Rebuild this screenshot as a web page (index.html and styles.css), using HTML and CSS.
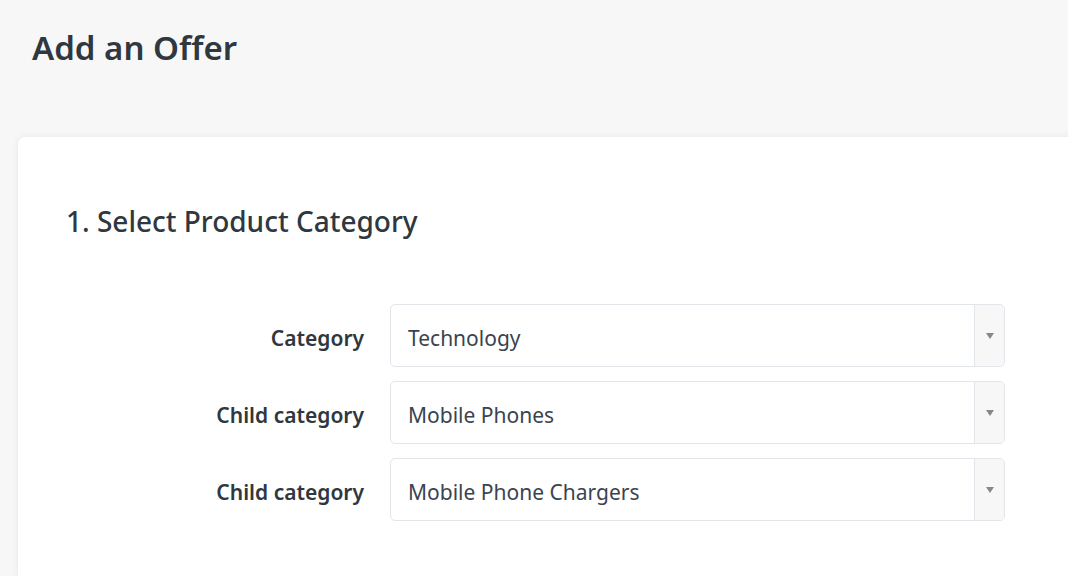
FILE: index.html
```html
<!DOCTYPE html>
<html>
<head>
<meta charset="utf-8">
<link rel="stylesheet" href="styles.css">
</head>
<body>
<div class="page">
  <h1 class="title">Add an Offer</h1>
  <div class="card">
    <h2 class="section-title">1. Select Product Category</h2>
    <div class="form">
      <div class="row">
        <label class="label">Category</label>
        <div class="select"><span class="value">Technology</span><span class="arrow"></span></div>
      </div>
      <div class="row">
        <label class="label">Child category</label>
        <div class="select"><span class="value">Mobile Phones</span><span class="arrow"></span></div>
      </div>
      <div class="row">
        <label class="label">Child category</label>
        <div class="select"><span class="value">Mobile Phone Chargers</span><span class="arrow"></span></div>
      </div>
    </div>
  </div>
</div>
</body>
</html>
```
FILE: styles.css
```css
html, body {
  margin: 0;
  padding: 0;
  background: #f7f7f7;
  font-family: "Noto Sans", "Open Sans", sans-serif;
  color: #2f3a45;
  overflow: hidden;
  height: 576px;
}
.page {
  padding: 26px 0 0 18px;
  width: 1100px;
  box-sizing: border-box;
}
.title {
  margin: 0 0 0 14px;
  font-size: 33px;
  font-weight: 600;
  line-height: 44px;
  color: #2f3740;
}
.card {
  box-sizing: border-box;
  margin-top: 67px;
  background: #fff;
  border-radius: 7px 0 0 0;
  box-shadow: 0 0 7px rgba(0,0,0,0.07);
  padding: 65px 0 0 48px;
  height: 439px;
}
.section-title {
  margin: 0;
  font-size: 28px;
  font-weight: 500;
  line-height: 38px;
  color: #2f3740;
}
.form {
  margin-top: 64px;
  display: flex;
  flex-direction: column;
  gap: 14px;
}
.row {
  display: flex;
  align-items: center;
  padding-top: 5px;
}
.row .select { margin-top: -5px; }
.label {
  width: 298px;
  text-align: right;
  font-size: 21px;
  font-weight: 600;
  color: #2f3740;
  padding-right: 26px;
}
.select {
  width: 613px;
  height: 61px;
  border: 1px solid #e2e6eb;
  border-radius: 5px;
  display: flex;
  align-items: stretch;
  overflow: hidden;
}
.value {
  flex: 1;
  display: flex;
  align-items: center;
  padding-left: 17px;
  padding-top: 5px;
  font-size: 21px;
  color: #3a4450;
}
.arrow {
  width: 29px;
  border-left: 1px solid #e2e6eb;
  background: #f7f7f7;
  position: relative;
}
.arrow::after {
  content: "";
  position: absolute;
  left: 11px;
  top: 28px;
  border-left: 4px solid transparent;
  border-right: 4px solid transparent;
  border-top: 6px solid #888;
}
```
